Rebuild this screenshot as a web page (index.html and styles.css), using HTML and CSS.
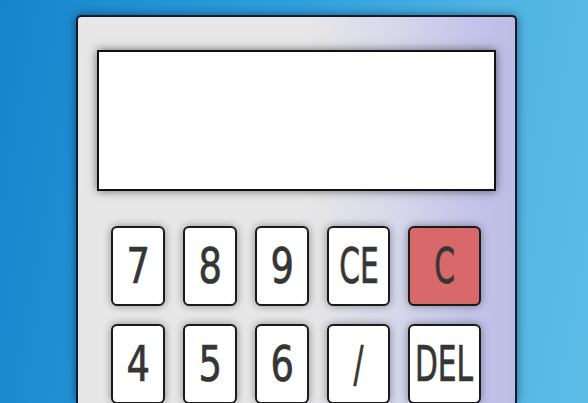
FILE: index.html
```html
<!DOCTYPE html>
<html>
<head>
<meta charset="utf-8">
<link rel="stylesheet" href="styles.css">
</head>
<body>
<div class="calc">
  <div class="display"></div>
  <div class="keys">
    <div class="row">
      <button class="key"><span>7</span></button>
      <button class="key"><span>8</span></button>
      <button class="key"><span>9</span></button>
      <button class="key wide"><span>CE</span></button>
      <button class="key wider clear"><span>C</span></button>
    </div>
    <div class="row">
      <button class="key"><span>4</span></button>
      <button class="key"><span>5</span></button>
      <button class="key"><span>6</span></button>
      <button class="key wide"><span>/</span></button>
      <button class="key wider"><span>DEL</span></button>
    </div>
  </div>
</div>
</body>
</html>
```
FILE: styles.css
```css
html, body {
  margin: 0;
  height: 100%;
  overflow: hidden;
}
body {
  background: linear-gradient(100deg, #1684cc 0%, #2e9fdc 45%, #4fb4e2 75%, #5cbce6 100%);
}
.calc {
  box-sizing: border-box;
  width: 441px;
  height: 388px;
  margin: 15px 0 0 76px;
  border: 2px solid #0f1b29;
  border-bottom: none;
  border-radius: 5px 5px 0 0;
  padding: 33px 19px 0 19px;
  background: linear-gradient(to right, #e7e7e7 0%, #e7e7e7 52%, #d8d8eb 72%, #c4c3e9 90%, #bdbce6 100%);
  box-shadow: 0 0 10px rgba(0, 20, 50, 0.55);
}
.display {
  box-sizing: border-box;
  width: 399px;
  height: 141px;
  background: #fff;
  border: 2px solid #111;
  box-shadow: 0 0 9px rgba(0, 0, 0, 0.55);
}
.keys {
  margin: 35px 0 0 14px;
  display: flex;
  flex-direction: column;
  gap: 18px;
}
.row {
  display: flex;
  gap: 18px;
}
.key {
  box-sizing: border-box;
  width: 54px;
  height: 80px;
  padding: 0;
  background: #fff;
  border: 2px solid #1a1a1a;
  border-radius: 6px;
  box-shadow: 0 0 8px rgba(0, 0, 0, 0.4);
  display: flex;
  align-items: center;
  justify-content: center;
  font-family: "DejaVu Sans", sans-serif;
  font-stretch: condensed;
  font-size: 50px;
  color: #353535;
  -webkit-text-stroke: 0.7px #353535;
  line-height: 1;
  overflow: visible;
}
.key span {
  display: inline-block;
  transform: scaleX(0.82);
  white-space: nowrap;
}
.key.wide { width: 63px; }
.key.wider { width: 73px; }
.key.wide span, .key.wider span { transform: scaleX(0.66); }
.key.clear { background: #d9686a; }
```
